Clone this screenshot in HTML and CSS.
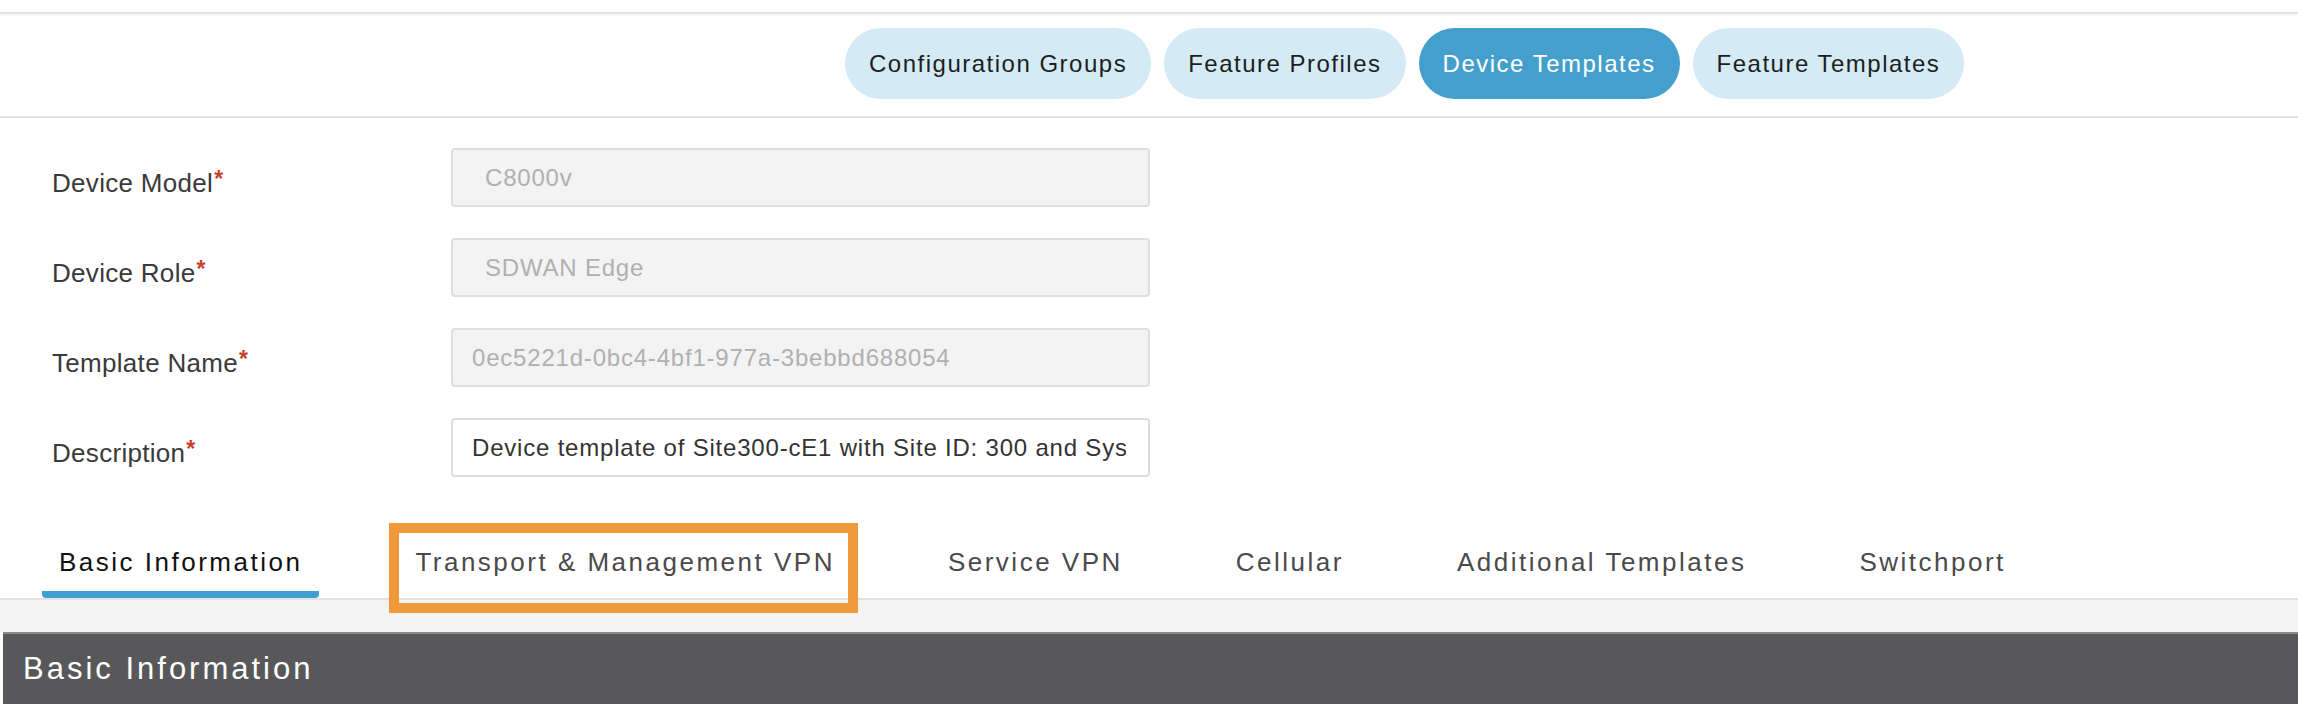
FILE: index.html
```html
<!DOCTYPE html>
<html lang="en">
<head>
<meta charset="utf-8">
<title>Device Template</title>
<link rel="stylesheet" href="styles.css">
</head>
<body>
<div class="top-strip"></div>
<header class="header">
  <nav class="pills">
    <span class="pill">Configuration Groups</span>
    <span class="pill">Feature Profiles</span>
    <span class="pill pill-active">Device Templates</span>
    <span class="pill">Feature Templates</span>
  </nav>
</header>
<form class="form">
  <label class="label">Device Model<span class="req">*</span></label>
  <input class="field field-select" type="text" value="C8000v" disabled>
  <label class="label">Device Role<span class="req">*</span></label>
  <input class="field field-select" type="text" value="SDWAN Edge" disabled>
  <label class="label">Template Name<span class="req">*</span></label>
  <input class="field" type="text" value="0ec5221d-0bc4-4bf1-977a-3bebbd688054" disabled>
  <label class="label">Description<span class="req">*</span></label>
  <input class="field field-edit" type="text" value="Device template of Site300-cE1 with Site ID: 300 and System IP: 10.3.0.1">
</form>
<div class="tabs">
  <span class="tab tab-active">Basic Information</span>
  <span class="tab tab-marked">Transport &amp; Management VPN<span class="highlight"></span></span>
  <span class="tab">Service VPN</span>
  <span class="tab">Cellular</span>
  <span class="tab">Additional Templates</span>
  <span class="tab">Switchport</span>
</div>
<div class="band"></div>
<section class="section-bar">Basic Information</section>
</body>
</html>
```

FILE: styles.css
```css
html, body {
  margin: 0;
  padding: 0;
  background: #ffffff;
  font-family: "Liberation Sans", Arial, sans-serif;
  color: #333333;
  overflow: hidden;
}

.top-strip {
  height: 12px;
  border-bottom: 2px solid #e4e4e4;
  box-shadow: 0 1px 2px rgba(0, 0, 0, 0.06);
}

.header {
  padding: 14px 0 17px 845px;
  border-bottom: 2px solid #e2e2e2;
}

.pills {
  display: flex;
  gap: 13px;
}

.pill {
  display: flex;
  align-items: center;
  height: 71px;
  padding: 0 24px;
  border-radius: 36px;
  background: #d4ebf5;
  color: #1e1e1e;
  font-size: 24px;
  letter-spacing: 1.5px;
  white-space: nowrap;
}

.pill-active {
  background: #449fcc;
  color: #ffffff;
}

.form {
  display: grid;
  grid-template-columns: 399px 699px;
  grid-auto-rows: 59px;
  row-gap: 31px;
  align-items: center;
  padding: 30px 0 0 52px;
  margin: 0;
}

.label {
  font-size: 26px;
  letter-spacing: 0.3px;
  color: #3a3a3a;
  padding-top: 12px;
}

.req {
  color: #c8402b;
  font-size: 23px;
  font-weight: bold;
  vertical-align: 5px;
  line-height: 0;
  margin-left: 1px;
}

.field {
  box-sizing: border-box;
  width: 699px;
  height: 59px;
  padding: 0 12px 0 19px;
  border: 2px solid #dedede;
  border-radius: 4px;
  background: #f3f3f3;
  color: #b0b0b0;
  font-family: "Liberation Sans", Arial, sans-serif;
  font-size: 24px;
  letter-spacing: 0.8px;
  outline: none;
}

.field:disabled {
  color: #b0b0b0;
  -webkit-text-fill-color: #b0b0b0;
  opacity: 1;
}

.field-select {
  padding-left: 32px;
}

.field-edit {
  background: #ffffff;
  color: #333333;
  padding-right: 22px;
}

.tabs {
  display: flex;
  gap: 79px;
  margin-top: 56px;
  padding-left: 42px;
  border-bottom: 2px solid #e2e2e2;
}

.tab {
  position: relative;
  display: flex;
  align-items: center;
  height: 58px;
  padding: 0 17px;
  border-bottom: 7px solid transparent;
  font-size: 26px;
  letter-spacing: 2.5px;
  color: #4a4a4a;
  white-space: nowrap;
}

.tab-active {
  color: #111111;
  border-bottom-color: #3f9fd0;
  border-radius: 0 0 4px 4px;
}

.highlight {
  position: absolute;
  top: -10px;
  left: -9px;
  right: -6px;
  height: 90px;
  box-sizing: border-box;
  border: 10px solid #f0993a;
  pointer-events: none;
}

.band {
  height: 32px;
  background: #f3f3f3;
}

.section-bar {
  margin-left: 3px;
  height: 80px;
  border-top: 2px solid #8a8a8a;
  background: #58585a;
  color: #ffffff;
  font-size: 31px;
  letter-spacing: 3px;
  line-height: 70px;
  padding-left: 20px;
}
```
